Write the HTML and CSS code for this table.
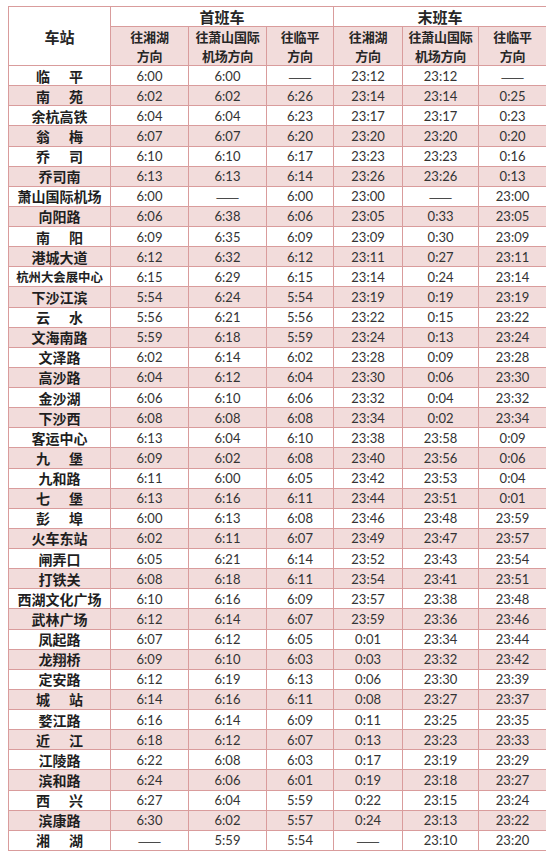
FILE: index.html
```html
<!DOCTYPE html>
<html lang="zh">
<head>
<meta charset="utf-8">
<title>首末班车时刻表</title>
<link rel="stylesheet" href="styles.css">
</head>
<body>
<table class="tt">
<colgroup>
<col class="c-st"><col class="c-a"><col class="c-b"><col class="c-c"><col class="c-d"><col class="c-e"><col class="c-f">
</colgroup>
<thead>
<tr class="h1"><th rowspan="2" class="hst">车站</th><th colspan="3">首班车</th><th colspan="3">末班车</th></tr>
<tr class="h2"><th>往湘湖<br>方向</th><th>往萧山国际<br>机场方向</th><th>往临平<br>方向</th><th>往湘湖<br>方向</th><th>往萧山国际<br>机场方向</th><th>往临平<br>方向</th></tr>
</thead>
<tbody>
<tr><th><span class="two">临平</span></th><td>6:00</td><td>6:00</td><td class="d">——</td><td>23:12</td><td>23:12</td><td class="d">——</td></tr>
<tr><th><span class="two">南苑</span></th><td>6:02</td><td>6:02</td><td>6:26</td><td>23:14</td><td>23:14</td><td>0:25</td></tr>
<tr><th>余杭高铁</th><td>6:04</td><td>6:04</td><td>6:23</td><td>23:17</td><td>23:17</td><td>0:23</td></tr>
<tr><th><span class="two">翁梅</span></th><td>6:07</td><td>6:07</td><td>6:20</td><td>23:20</td><td>23:20</td><td>0:20</td></tr>
<tr><th><span class="two">乔司</span></th><td>6:10</td><td>6:10</td><td>6:17</td><td>23:23</td><td>23:23</td><td>0:16</td></tr>
<tr><th>乔司南</th><td>6:13</td><td>6:13</td><td>6:14</td><td>23:26</td><td>23:26</td><td>0:13</td></tr>
<tr><th>萧山国际机场</th><td>6:00</td><td class="d">——</td><td>6:00</td><td>23:00</td><td class="d">——</td><td>23:00</td></tr>
<tr><th>向阳路</th><td>6:06</td><td>6:38</td><td>6:06</td><td>23:05</td><td>0:33</td><td>23:05</td></tr>
<tr><th><span class="two">南阳</span></th><td>6:09</td><td>6:35</td><td>6:09</td><td>23:09</td><td>0:30</td><td>23:09</td></tr>
<tr><th>港城大道</th><td>6:12</td><td>6:32</td><td>6:12</td><td>23:11</td><td>0:27</td><td>23:11</td></tr>
<tr><th class="small">杭州大会展中心</th><td>6:15</td><td>6:29</td><td>6:15</td><td>23:14</td><td>0:24</td><td>23:14</td></tr>
<tr><th>下沙江滨</th><td>5:54</td><td>6:24</td><td>5:54</td><td>23:19</td><td>0:19</td><td>23:19</td></tr>
<tr><th><span class="two">云水</span></th><td>5:56</td><td>6:21</td><td>5:56</td><td>23:22</td><td>0:15</td><td>23:22</td></tr>
<tr><th>文海南路</th><td>5:59</td><td>6:18</td><td>5:59</td><td>23:24</td><td>0:13</td><td>23:24</td></tr>
<tr><th>文泽路</th><td>6:02</td><td>6:14</td><td>6:02</td><td>23:28</td><td>0:09</td><td>23:28</td></tr>
<tr><th>高沙路</th><td>6:04</td><td>6:12</td><td>6:04</td><td>23:30</td><td>0:06</td><td>23:30</td></tr>
<tr><th>金沙湖</th><td>6:06</td><td>6:10</td><td>6:06</td><td>23:32</td><td>0:04</td><td>23:32</td></tr>
<tr><th>下沙西</th><td>6:08</td><td>6:08</td><td>6:08</td><td>23:34</td><td>0:02</td><td>23:34</td></tr>
<tr><th>客运中心</th><td>6:13</td><td>6:04</td><td>6:10</td><td>23:38</td><td>23:58</td><td>0:09</td></tr>
<tr><th><span class="two">九堡</span></th><td>6:09</td><td>6:02</td><td>6:08</td><td>23:40</td><td>23:56</td><td>0:06</td></tr>
<tr><th>九和路</th><td>6:11</td><td>6:00</td><td>6:05</td><td>23:42</td><td>23:53</td><td>0:04</td></tr>
<tr><th><span class="two">七堡</span></th><td>6:13</td><td>6:16</td><td>6:11</td><td>23:44</td><td>23:51</td><td>0:01</td></tr>
<tr><th><span class="two">彭埠</span></th><td>6:00</td><td>6:13</td><td>6:08</td><td>23:46</td><td>23:48</td><td>23:59</td></tr>
<tr><th>火车东站</th><td>6:02</td><td>6:11</td><td>6:07</td><td>23:49</td><td>23:47</td><td>23:57</td></tr>
<tr><th>闸弄口</th><td>6:05</td><td>6:21</td><td>6:14</td><td>23:52</td><td>23:43</td><td>23:54</td></tr>
<tr><th>打铁关</th><td>6:08</td><td>6:18</td><td>6:11</td><td>23:54</td><td>23:41</td><td>23:51</td></tr>
<tr><th>西湖文化广场</th><td>6:10</td><td>6:16</td><td>6:09</td><td>23:57</td><td>23:38</td><td>23:48</td></tr>
<tr><th>武林广场</th><td>6:12</td><td>6:14</td><td>6:07</td><td>23:59</td><td>23:36</td><td>23:46</td></tr>
<tr><th>凤起路</th><td>6:07</td><td>6:12</td><td>6:05</td><td>0:01</td><td>23:34</td><td>23:44</td></tr>
<tr><th>龙翔桥</th><td>6:09</td><td>6:10</td><td>6:03</td><td>0:03</td><td>23:32</td><td>23:42</td></tr>
<tr><th>定安路</th><td>6:12</td><td>6:19</td><td>6:13</td><td>0:06</td><td>23:30</td><td>23:39</td></tr>
<tr><th><span class="two">城站</span></th><td>6:14</td><td>6:16</td><td>6:11</td><td>0:08</td><td>23:27</td><td>23:37</td></tr>
<tr><th>婺江路</th><td>6:16</td><td>6:14</td><td>6:09</td><td>0:11</td><td>23:25</td><td>23:35</td></tr>
<tr><th><span class="two">近江</span></th><td>6:18</td><td>6:12</td><td>6:07</td><td>0:13</td><td>23:23</td><td>23:33</td></tr>
<tr><th>江陵路</th><td>6:22</td><td>6:08</td><td>6:03</td><td>0:17</td><td>23:19</td><td>23:29</td></tr>
<tr><th>滨和路</th><td>6:24</td><td>6:06</td><td>6:01</td><td>0:19</td><td>23:18</td><td>23:27</td></tr>
<tr><th><span class="two">西兴</span></th><td>6:27</td><td>6:04</td><td>5:59</td><td>0:22</td><td>23:15</td><td>23:24</td></tr>
<tr><th>滨康路</th><td>6:30</td><td>6:02</td><td>5:57</td><td>0:24</td><td>23:13</td><td>23:22</td></tr>
<tr><th><span class="two">湘湖</span></th><td class="d">——</td><td>5:59</td><td>5:54</td><td class="d">——</td><td>23:10</td><td>23:20</td></tr>
</tbody>
</table>
</body>
</html>
```
FILE: styles.css
```css
html, body {
  background: #ffffff;
}
body {
  margin: 6px 8px 0 8px;
}
.tt {
  border-collapse: collapse;
  table-layout: fixed;
  width: 538px;
  font-family: "Noto Sans CJK SC", sans-serif;
  color: #3a3a3a;
}
.c-st { width: 102px; }
.c-a { width: 78px; }
.c-b { width: 78px; }
.c-c { width: 67px; }
.c-d { width: 69px; }
.c-e { width: 76px; }
.c-f { width: 68px; }

.tt th, .tt td {
  border: 1px solid #d99c9c;
  padding: 0;
  text-align: center;
  vertical-align: middle;
  overflow: hidden;
  white-space: nowrap;
}
.tt thead th {
  font-family: "Noto Sans CJK SC", sans-serif;
  font-weight: 700;
  color: #262626;
  background: #ffffff;
}
.h1 th {
  height: 19px;
  font-size: 15px;
  line-height: 19px;
}
.h1 .hst {
  font-size: 15px;
}
.h2 th {
  height: 38px;
  background: #f2dcdb !important;
  font-size: 13px;
  line-height: 19px;
  letter-spacing: -0.2px;
}
.tt tbody tr {
  height: 20.13px;
}
.tt tbody th {
  font-family: "Noto Sans CJK SC", sans-serif;
  font-weight: 700;
  font-size: 14px;
  line-height: 18px;
  color: #1f1f1f;
}
.tt tbody th.small {
  font-size: 12.4px;
  letter-spacing: 0;
}
.two {
  letter-spacing: 19px;
  padding-left: 19px;
}
.tt tbody td {
  font-family: Lato, "Liberation Sans", sans-serif;
  font-size: 13px;
  line-height: 18px;
  color: #333333;
}
.tt tbody td.d {
  font-family: "Noto Sans CJK SC", sans-serif;
  font-size: 14px;
  color: #4a4a4a;
}
.tt tbody tr:nth-child(even) th,
.tt tbody tr:nth-child(even) td {
  background: #f2dcdb;
}
```
